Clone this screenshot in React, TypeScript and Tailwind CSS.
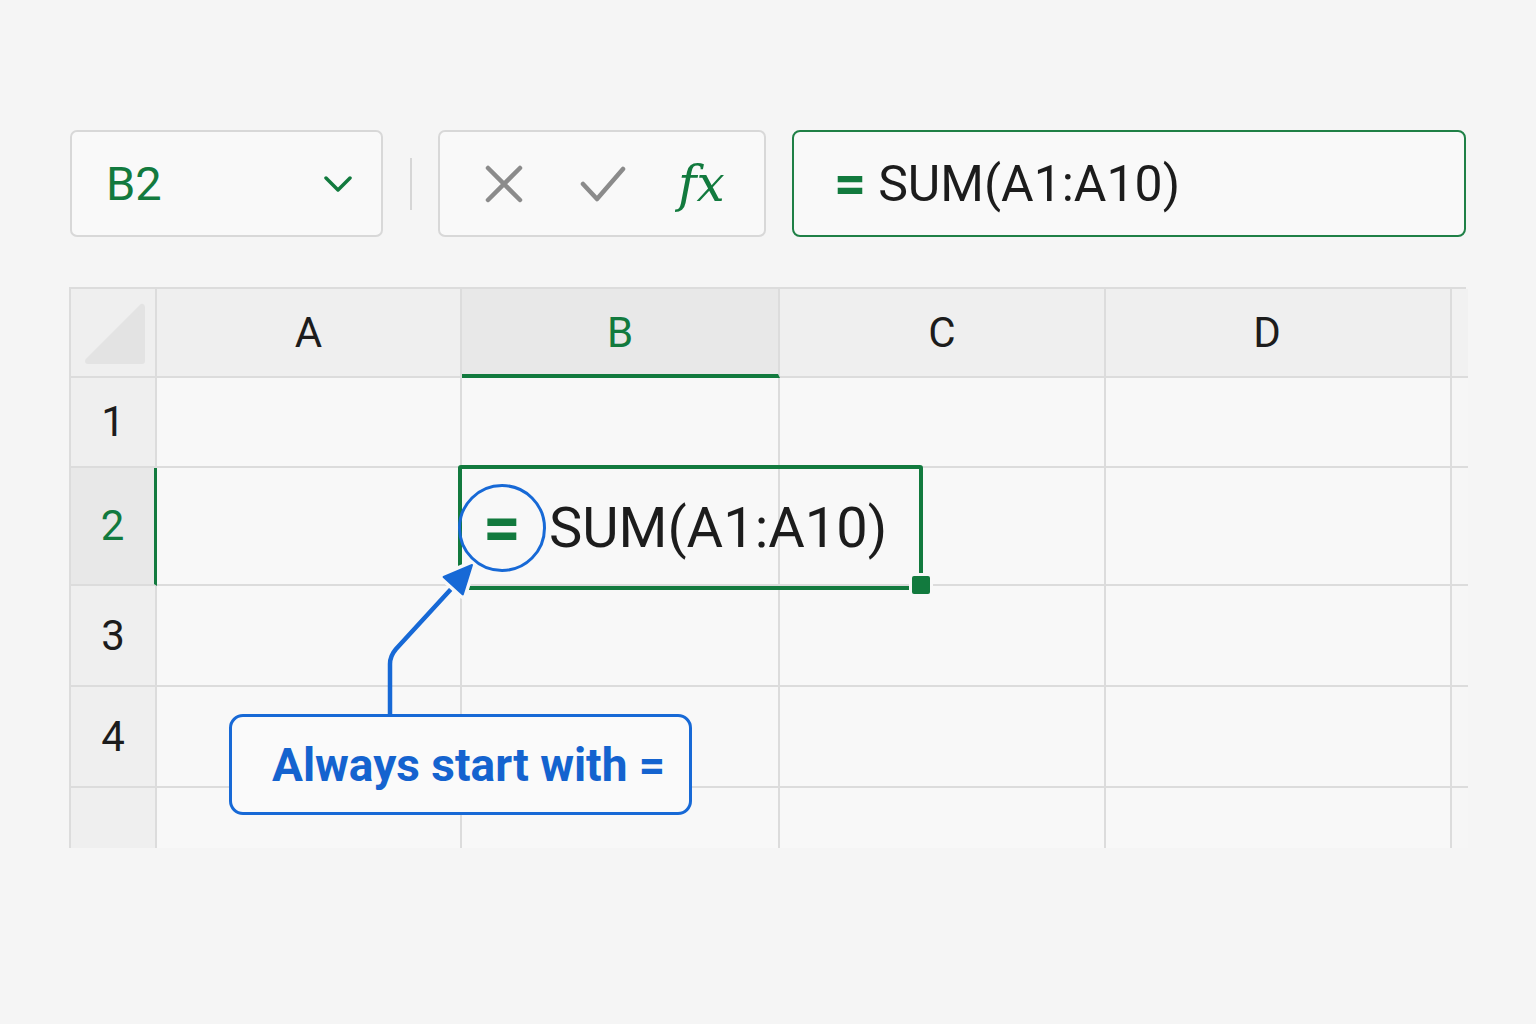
import React from "react";

// column headers of the sheet, "" = corner / clipped sliver
const headers = ["", "A", "B", "C", "D", ""];
const rowLabels = ["1", "2", "3", "4", ""];

const lineCls = "border-[#dcdcdc]";

function Corner() {
  return (
    <svg width="62" height="62" viewBox="0 0 62 62" className="ml-[4px] mt-[3px]">
      <path
        d="M4 58 L58 4 V58 Z"
        fill="#e3e3e3"
        stroke="#e3e3e3"
        strokeWidth="6"
        strokeLinejoin="round"
      />
    </svg>
  );
}

function HeaderCell({ label, i }: { label: string; i: number }) {
  if (i === 0) {
    return (
      <div className={`flex items-center justify-center border-r-2 border-b-2 bg-[#efefef] ${lineCls}`}>
        <Corner />
      </div>
    );
  }
  if (i === 5) {
    return <div className={`border-b-2 bg-[#f1f1f1] ${lineCls}`} />;
  }
  if (label === "B") {
    return (
      <div className="flex items-center justify-center border-r-2 border-r-[#dcdcdc] border-b-4 border-b-[#127a3e] bg-[#e8e8e8] pt-[3px] text-[42px] leading-none text-[#127a3e]">
        {label}
      </div>
    );
  }
  return (
    <div
      className={`flex items-center justify-center border-r-2 border-b-2 bg-[#efefef] text-[42px] leading-none text-[#1c1c1c] ${lineCls} ${
        label === "D" ? "pr-[22px]" : ""
      }`}
    >
      {label}
    </div>
  );
}

function RowCells({ label, last }: { label: string; last: boolean }) {
  const active = label === "2";
  const bottom = last ? "" : "border-b-2";
  return (
    <>
      {active ? (
        <div className="flex items-center justify-center border-r-[3px] border-r-[#127a3e] border-b-2 border-b-[#dcdcdc] bg-[#e8e8e8] text-[42px] leading-none text-[#127a3e]">
          {label}
        </div>
      ) : (
        <div className={`flex items-center justify-center border-r-2 bg-[#efefef] text-[42px] leading-none text-[#1c1c1c] ${bottom} ${lineCls}`}>
          {label}
        </div>
      )}
      {[0, 1, 2, 3].map((c) => (
        <div key={c} className={`border-r-2 bg-[#f8f8f8] ${bottom} ${lineCls}`} />
      ))}
      <div className={`bg-[#f6f6f6] ${bottom} ${lineCls}`} />
    </>
  );
}

export default function App() {
  return (
    <div className="relative h-[1024px] w-[1536px] overflow-hidden bg-[#f5f5f5] font-['Roboto','Liberation_Sans',sans-serif]">
      {/* toolbar */}
      <div className="flex items-center pl-[70px] pt-[130px]">
        <div className="flex h-[107px] w-[313px] items-center justify-between rounded-[7px] border-2 border-[#d8d8d8] bg-[#f9f9f9] pl-[34px] pr-[29px]">
          <span className="text-[47px] leading-none text-[#127a3e]">B2</span>
          <svg width="28" height="18" viewBox="0 0 28 18">
            <polyline points="2,3 14,15 26,3" fill="none" stroke="#127a3e" strokeWidth="3.5" strokeLinecap="round" strokeLinejoin="round" />
          </svg>
        </div>

        <div className="ml-[27px] h-[52px] w-[2px] bg-[#d6d6d6]" />

        <div className="ml-[26px] flex h-[107px] w-[328px] items-center rounded-[7px] border-2 border-[#d8d8d8] bg-[#f9f9f9] pl-[45px]">
          <svg width="38" height="38" viewBox="0 0 38 38">
            <path d="M3 3 L35 35 M35 3 L3 35" stroke="#8b8b8b" strokeWidth="4.5" strokeLinecap="round" />
          </svg>
          <svg width="46" height="36" viewBox="0 0 46 36" className="ml-[57px]">
            <polyline points="3,18 17,33 43,3" fill="none" stroke="#8b8b8b" strokeWidth="4.5" strokeLinecap="round" strokeLinejoin="round" />
          </svg>
          <span className="ml-[52px] font-['DejaVu_Serif',serif] text-[50px] italic leading-none text-[#127a3e]">
            fx
          </span>
        </div>

        <div className="ml-[26px] flex h-[107px] w-[674px] items-center rounded-[8px] border-2 border-[#1f8046] bg-[#f9f9f9] pl-[40px]">
          <span className="text-[56px] font-bold leading-none text-[#127a3e]">=</span>
          <span className="ml-[12px] text-[50px] leading-none text-[#1c1c1c]">SUM(A1:A10)</span>
        </div>
      </div>

      {/* sheet */}
      <div
        className={`ml-[69px] mt-[50px] grid w-[1397px] grid-cols-[86px_305px_318px_326px_346px_16px] grid-rows-[89px_90px_118px_101px_101px_60px] border-t-2 border-l-2 ${lineCls}`}
      >
        {headers.map((h, i) => (
          <HeaderCell key={i} label={h} i={i} />
        ))}
        {rowLabels.map((r, i) => (
          <RowCells key={i} label={r} last={i === rowLabels.length - 1} />
        ))}
      </div>

      {/* selected cell B2 */}
      <div className="absolute left-[458px] top-[465px] h-[125px] w-[465px] rounded-[3px] border-4 border-[#127a3e]" />
      <div className="absolute left-[912px] top-[576px] h-[18px] w-[18px] rounded-[2px] bg-[#127a3e] shadow-[0_0_0_3px_#f8f8f8]" />

      {/* pointer arrow */}
      <svg className="absolute left-[370px] top-[550px]" width="120" height="170" viewBox="370 550 120 170">
        <path d="M390 716 V664 Q390 656 396 649 L452 588" fill="none" stroke="#1769d6" strokeWidth="4.5" strokeLinecap="round" strokeLinejoin="round" />
        <polygon points="472,565 462.8,594.4 443.6,577" fill="#f8f8f8" stroke="#f8f8f8" strokeWidth="9" strokeLinejoin="round" />
        <polygon points="472,565 462.8,594.4 443.6,577" fill="#1769d6" stroke="#1769d6" strokeWidth="2" strokeLinejoin="round" />
      </svg>

      {/* cell content */}
      <div className="absolute left-[458px] top-[484px] flex items-center">
        <div className="flex h-[88px] w-[88px] items-center justify-center rounded-full border-[3px] border-[#1769d6]">
          <span className="text-[66px] font-bold leading-none text-[#127a3e]">=</span>
        </div>
        <span className="ml-[3px] text-[56px] leading-none text-[#1c1c1c]">SUM(A1:A10)</span>
      </div>

      {/* callout */}
      <div className="absolute left-[229px] top-[714px] flex h-[101px] w-[463px] items-center rounded-[14px] border-[3px] border-[#1769d6] bg-[#fafafa] pl-[40px]">
        <span className="text-[46px] font-bold leading-none text-[#1463cf]">Always start with =</span>
      </div>
    </div>
  );
}
